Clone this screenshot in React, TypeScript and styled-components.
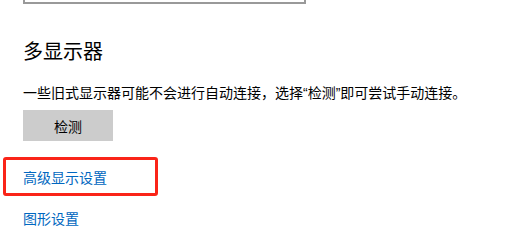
import React from 'react';
import styled, { createGlobalStyle } from 'styled-components';

const GlobalStyle = createGlobalStyle`
  html, body {
    margin: 0;
    padding: 0;
    background: #ffffff;
  }
  body {
    font-family: "Noto Sans CJK SC", "Microsoft YaHei", sans-serif;
    color: #000000;
  }
`;

const Page = styled.div`
  width: 505px;
  height: 234px;
  overflow: hidden;
  padding-left: 23px;
  box-sizing: border-box;
`;

const DropdownEdge = styled.div`
  width: 279px;
  height: 2px;
  border: 2px solid #999999;
  border-top: none;
  box-sizing: content-box;
`;

const Heading = styled.h2`
  margin: 33px 0 0;
  font-size: 20px;
  font-weight: 400;
  line-height: 28px;
`;

// Latin family first so the quote marks stay narrow, as in the original
const Description = styled.p`
  margin: 18px 0 0;
  font-family: "Liberation Sans", "Noto Sans CJK SC", sans-serif;
  font-size: 14px;
  line-height: 20px;
  white-space: nowrap;
`;

const DetectButton = styled.button`
  display: flex;
  align-items: center;
  justify-content: center;
  width: 90px;
  height: 31px;
  margin-top: 7px;
  padding: 0;
  border: none;
  background: #cccccc;
  color: #000000;
  font-family: inherit;
  font-size: 14px;
`;

const LinkRow = styled.div<{ $gap: number }>`
  position: relative;
  margin-top: ${({ $gap }) => $gap}px;
  line-height: 20px;
`;

const SettingsLink = styled.a`
  color: #0067c0;
  font-size: 14px;
  text-decoration: none;
`;

const Highlight = styled.div`
  position: absolute;
  left: -20px;
  top: -9px;
  width: 155px;
  height: 39px;
  border: 3px solid #fa2418;
  border-radius: 3px;
  box-sizing: border-box;
  pointer-events: none;
`;

export default function App() {
  return (
    <>
      <GlobalStyle />
      <Page>
        <DropdownEdge />
        <Heading>多显示器</Heading>
        <Description>一些旧式显示器可能不会进行自动连接，选择“检测”即可尝试手动连接。</Description>
        <DetectButton>检测</DetectButton>
        <LinkRow $gap={25}>
          <SettingsLink href="#">高级显示设置</SettingsLink>
          <Highlight />
        </LinkRow>
        <LinkRow $gap={20}>
          <SettingsLink href="#">图形设置</SettingsLink>
        </LinkRow>
      </Page>
    </>
  );
}
